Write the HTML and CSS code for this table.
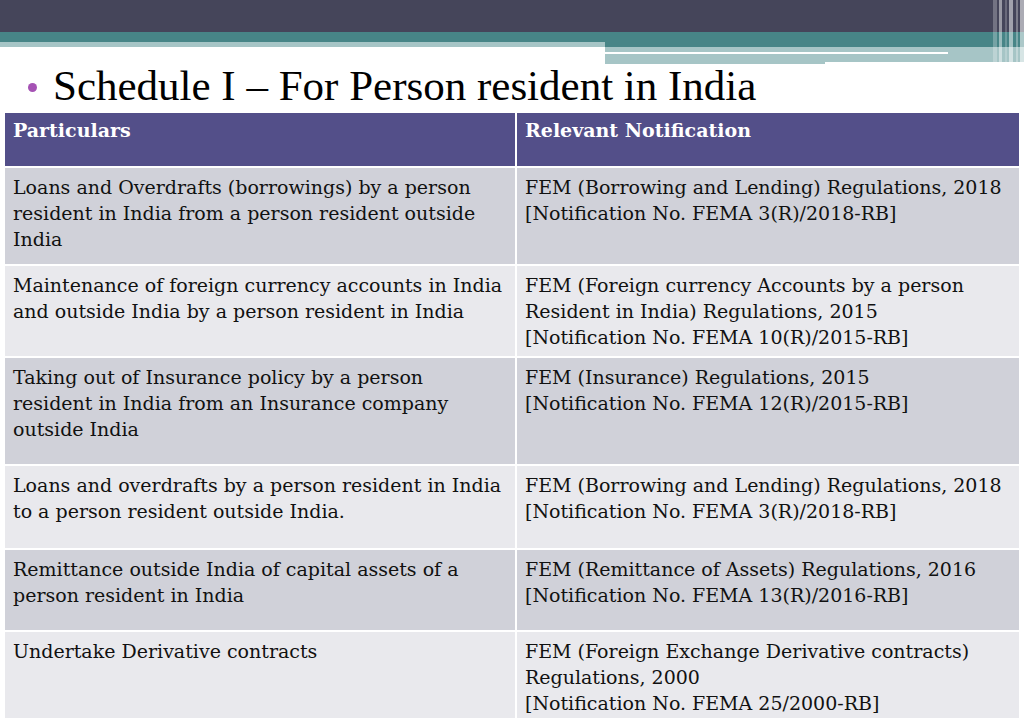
FILE: index.html
```html
<!DOCTYPE html>
<html>
<head>
<meta charset="utf-8">
<link rel="stylesheet" href="styles.css">
</head>
<body>
<div class="banner">
  <div class="bar-dark"></div>
  <div class="bar-lower">
    <div class="deco-left">
      <div class="teal t-left"></div>
      <div class="light l-left"></div>
    </div>
    <div class="deco-right">
      <div class="teal t-right"></div>
      <div class="light l-right1"></div>
      <div class="line-row">
        <div class="white-line"></div>
        <div class="light-fill"></div>
      </div>
      <div class="bottom-row">
        <div class="light b-a"></div>
        <div class="light b-b"></div>
      </div>
    </div>
  </div>
  <div class="stripes">
    <span class="s1"></span><span class="s2"></span><span class="s3"></span><span class="s4"></span><span class="s5"></span><span class="s6"></span>
  </div>
</div>

<h1 class="title"><span class="bullet"></span><span>Schedule I – For Person resident in India</span></h1>

<div class="grid">
  <div class="cell head">Particulars</div>
  <div class="cell head">Relevant Notification</div>

  <div class="cell dark r1">Loans and Overdrafts (borrowings) by a person<br>resident in India from a person resident outside<br>India</div>
  <div class="cell dark r1">FEM (Borrowing and Lending) Regulations, 2018<br>[Notification No. FEMA 3(R)/2018-RB]</div>

  <div class="cell light-row r2">Maintenance of foreign currency accounts in India<br>and outside India by a person resident in India</div>
  <div class="cell light-row r2">FEM (Foreign currency Accounts by a person<br>Resident in India) Regulations, 2015<br>[Notification No. FEMA 10(R)/2015-RB]</div>

  <div class="cell dark r3">Taking out of Insurance policy by a person<br>resident in India from an Insurance company<br>outside India</div>
  <div class="cell dark r3">FEM (Insurance) Regulations, 2015<br>[Notification No. FEMA 12(R)/2015-RB]</div>

  <div class="cell light-row r4">Loans and overdrafts by a person resident in India<br>to a person resident outside India.</div>
  <div class="cell light-row r4">FEM (Borrowing and Lending) Regulations, 2018<br>[Notification No. FEMA 3(R)/2018-RB]</div>

  <div class="cell dark r5">Remittance outside India of capital assets of a<br>person resident in India</div>
  <div class="cell dark r5">FEM (Remittance of Assets) Regulations, 2016<br>[Notification No. FEMA 13(R)/2016-RB]</div>

  <div class="cell light-row r6">Undertake Derivative contracts</div>
  <div class="cell light-row r6">FEM (Foreign Exchange Derivative contracts)<br>Regulations, 2000<br>[Notification No. FEMA 25/2000-RB]</div>
</div>
</body>
</html>
```

FILE: styles.css
```css
html, body {
  margin: 0;
  padding: 0;
  background: #ffffff;
  width: 1024px;
  height: 724px;
  overflow: hidden;
}

body {
  font-family: "DejaVu Serif", "Liberation Serif", serif;
  color: #111111;
}

.banner {
  position: relative;
  height: 64px;
}

.bar-dark {
  height: 32px;
  background: #45455a;
}

.bar-lower {
  display: flex;
}

.deco-left {
  width: 605px;
}

.deco-right {
  flex: 1;
}

.teal {
  background: #478587;
}

.light {
  background: #a6c5c6;
}

.t-left { height: 10px; }
.l-left { height: 5px; }

.t-right { height: 15px; }
.l-right1 { height: 5px; }

.line-row {
  display: flex;
  height: 2px;
}

.white-line {
  width: 343px;
  background: #ffffff;
}

.light-fill {
  flex: 1;
  background: #a6c5c6;
}

.bottom-row {
  display: flex;
  align-items: flex-start;
}

.b-a {
  width: 220px;
  height: 10px;
}

.b-b {
  flex: 1;
  height: 8px;
}

.stripes {
  position: absolute;
  top: 0;
  right: 0;
  width: 31px;
  height: 64px;
  display: flex;
}

.stripes span {
  display: block;
  height: 100%;
}

.s1 { width: 4px; background: rgba(255,255,255,0.25); }
.s2 { width: 3px; background: rgba(255,255,255,0.45); margin-left: 2px; }
.s3 { width: 2px; background: rgba(255,255,255,0.2); margin-left: 3px; }
.s4 { width: 4px; background: rgba(255,255,255,0.5); margin-left: 2px; }
.s5 { width: 2px; background: rgba(255,255,255,0.3); margin-left: 3px; }
.s6 { width: 4px; background: rgba(255,255,255,0.55); margin-left: 2px; }

.title {
  margin: 0;
  height: 49px;
  display: flex;
  align-items: center;
  font-family: "Liberation Serif", serif;
  font-weight: normal;
  font-size: 43px;
  line-height: 49px;
  color: #000000;
  padding-left: 28px;
  position: relative;
  top: -3px;
}

.bullet {
  width: 9px;
  height: 9px;
  border-radius: 50%;
  background: #a552b4;
  margin-right: 16px;
  margin-top: 4px;
}

.grid {
  margin: 0 5px;
  display: grid;
  grid-template-columns: 510px 502px;
  gap: 2px;
}

.cell {
  font-size: 19px;
  line-height: 26px;
  padding: 6px 8px 0 8px;
  box-sizing: border-box;
  white-space: nowrap;
}

.head {
  background: #534f89;
  color: #ffffff;
  font-weight: bold;
  height: 53px;
  padding-top: 4px;
}

.dark { background: #d0d1d9; }
.light-row { background: #e9e9ed; }

.r1 { height: 96px; }
.r2 { height: 90px; }
.r3 { height: 106px; }
.r4 { height: 82px; }
.r5 { height: 80px; }
.r6 { height: 86px; }
```
